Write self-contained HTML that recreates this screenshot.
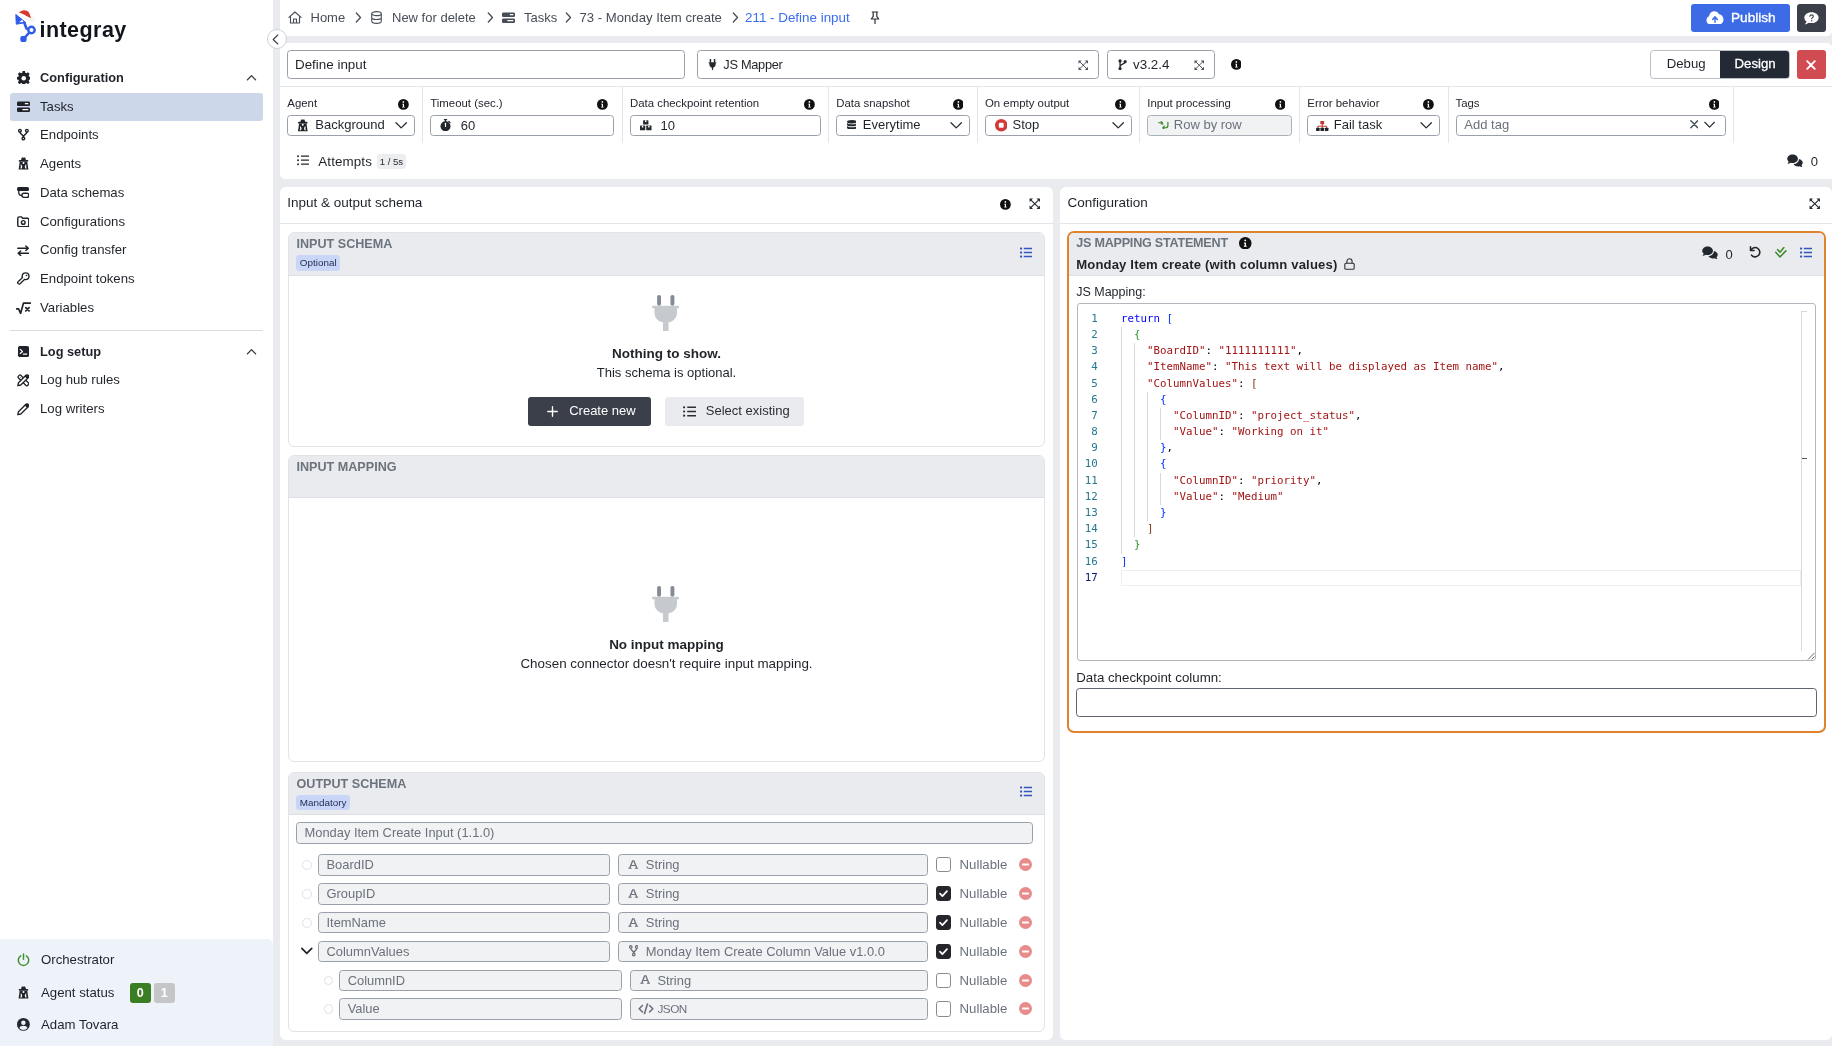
<!DOCTYPE html>
<html lang="en">
<head>
<meta charset="utf-8">
<title>211 - Define input</title>
<style>
*{box-sizing:border-box;margin:0;padding:0}
html,body{width:1832px;height:1046px;overflow:hidden}
body{font-family:"Liberation Sans",sans-serif;font-size:13px;color:#1f2329;background:#e9ebee;position:relative;line-height:1.2}
svg{display:block;flex:none}
.abs{position:absolute}
#app{position:absolute;left:0;top:0;width:1832px;height:1046px;background:#e9ebee;will-change:transform}
/* ---------- sidebar ---------- */
#sidebar{position:absolute;left:0;top:0;width:273px;height:1046px;background:#fff}
#logo{position:absolute;left:15px;top:8px;width:120px;height:36px}
#logo .word{position:absolute;left:24.5px;top:8.5px;font-weight:700;font-size:21.5px;letter-spacing:.45px;color:#12151c;line-height:26px}
.nav{position:absolute;left:10px;width:253px;height:28.8px;display:flex;align-items:center;border-radius:3px;font-size:13.2px;color:#1f2329}
.nav .ic{width:30px;padding-left:6.5px}
.nav.head{font-weight:700;font-size:12.8px;padding-top:1.5px}
.nav.sel{background:#cdd7ea;top:92.6px;height:28.2px}
.nav .chev{position:absolute;right:6.5px;top:10px}
#sidebar hr{position:absolute;left:10px;width:253px;top:330px;border:0;border-top:1px solid #d9dce0}
#sbottom{position:absolute;left:0;top:939px;width:273px;height:107px;background:#eef2f9;border-top-right-radius:6px}
#sbottom .row{position:absolute;left:17px;height:20px;display:flex;align-items:center;font-size:13.2px}
#sbottom .row .ic{width:24px}
.bdg{display:inline-block;width:21px;height:20.5px;line-height:20.5px;text-align:center;border-radius:3px;font-weight:700;font-size:12.6px;color:#fff}
/* ---------- top ---------- */
#crumbs{position:absolute;left:280px;top:0;width:1552px;height:36.2px;background:#fff;border-bottom-right-radius:5px}
#crumbs .c{position:absolute;top:0;height:35px;line-height:35px;font-size:13px;color:#474d57;white-space:nowrap}
#crumbs .c.cur{color:#3a6cf0}
#crumbs svg{position:absolute}
#toggle{position:absolute;left:266.5px;top:29.3px;width:20px;height:20px;border-radius:50%;background:#fff;border:1px solid #cdd1d7;z-index:5}
#publish{position:absolute;left:1691px;top:3.5px;width:98.5px;height:28.2px;background:#3d6be6;border-radius:3px;color:#fff;font-weight:400;font-size:13.6px;line-height:28px;padding-left:40px;-webkit-text-stroke:.35px #fff}
#chat{position:absolute;left:1797px;top:3.5px;width:28.6px;height:28.2px;background:#3a3f4a;border-radius:3px}
/* ---------- task card ---------- */
#task{position:absolute;left:280px;top:42.8px;width:1552px;height:136px;background:#fff;border-bottom-left-radius:5px;border-top-right-radius:5px}
.inp{position:absolute;border:1px solid #9aa0aa;border-radius:3.5px;background:#fff;white-space:nowrap}
.inp.dis{background:#f1f2f3;color:#6b717c}
#task .sep{position:absolute;top:43.5px;width:1px;height:57px;background:#e4e6e9}
#task .lbl{position:absolute;top:53.5px;font-size:11.4px;line-height:14px;color:#23272e;white-space:nowrap}
#task .info{position:absolute;top:56px}
#task .f{top:72.5px;height:20.5px;font-size:13px;line-height:18.5px}
#task .f svg{position:absolute}
#task .f span{position:absolute;top:0}
/* ---------- panels ---------- */
.panel{position:absolute;top:186.5px;height:853px;background:#fff;border-radius:6px}
.panel .ph{position:absolute;left:0;right:0;top:0;height:37px;border-bottom:1px solid #e4e6e9;font-size:13.5px;line-height:32.6px;padding-left:7.3px;color:#1f2329}
.card{position:absolute;border:1px solid #e1e3e7;border-radius:6px;background:#fff;overflow:hidden}
.card .ch{position:absolute;left:0;right:0;top:0;height:42.6px;background:#e9ebee;border-bottom:1px solid #dcdfe3}
.card .ct{position:absolute;left:7.5px;top:4px;font-weight:700;font-size:12.6px;line-height:15px;color:#6c737d;white-space:nowrap}
.tag{position:absolute;left:7px;top:22.3px;height:15.6px;line-height:16.6px;padding:0 3.8px;border-radius:3.5px;background:#c9d6f7;color:#1c2a52;font-size:9.9px}
.empty{position:absolute;left:0;right:0;text-align:center;white-space:nowrap}
.empty b{font-size:13.5px}
.btn{position:absolute;height:29px;border-radius:3px;font-size:13px;line-height:28px;white-space:nowrap}
.row{position:absolute;left:0;right:0;height:21.4px}
.row .inp{top:0;height:21.4px;font-size:12.9px;line-height:20.4px;padding-left:7.4px}
.row .radio{position:absolute;top:6px;width:9.5px;height:9.5px;border-radius:50%;border:1px solid #dfe1e5}
.row .cb{position:absolute;left:656px;top:3px;width:15.2px;height:15.2px;border:1.4px solid #868b94;border-radius:2.8px;background:#fff}
.row .cb.on{background:#24262b;border-color:#24262b}
.row .nl{position:absolute;left:679.6px;top:0;line-height:21.4px;font-size:13.2px;color:#6b717c}
.row .rm{position:absolute;left:739px;top:4px}
.row .ti{position:absolute;top:3.5px}
/* ---------- code ---------- */
#editor{position:absolute;left:8px;top:71px;width:739px;height:357px;border:1px solid #b3b7be;border-radius:3px;background:#fff;overflow:hidden}
#code{position:absolute;left:0;top:6.6px;font-family:"DejaVu Sans Mono","Liberation Mono",monospace;font-size:10.8px;line-height:16.2px;color:#000}
#code div{height:16.2px;position:relative;padding-left:43px;white-space:pre}
#code i{position:absolute;left:0;width:19.8px;text-align:right;font-style:normal;color:#237893}
.k{color:#0000ff}.s{color:#a31515}.b1{color:#0431fa}.b2{color:#319331}.b3{color:#7b3814}
.g{position:absolute;top:0;width:1px;height:16.2px;background:#d8d8d8}
</style>
</head>
<body>
<div id="app">
<!-- ================= SIDEBAR ================= -->
<aside id="sidebar">
  <div id="logo">
    <svg width="22" height="34" viewBox="0 0 22 34" style="position:absolute;left:0;top:1px">
      <path d="M.8 5.500 10.800 13.600 1.300 15.200z" fill="#2f5bea" stroke="#2f5bea" stroke-width="1" stroke-linejoin="round"/>
      <path d="M4 13.300 7.300 10.800 8.400 13z" fill="#fff"/>
      <path d="M9.300 13.800 11.500 19.500 16.500 21 9 29.500" fill="none" stroke="#2f5bea" stroke-width="2.600" stroke-linejoin="round"/>
      <circle cx="16.500" cy="21" r="4.400" fill="#2f5bea"/><circle cx="16.500" cy="21" r="2" fill="#fff"/>
      <rect x="5.300" y="27" width="6.300" height="6" rx="1.900" fill="#2f5bea"/>
      <path d="M3.500 3.800C6.500.600 11.500.200 14 3.600L16.300 9.200 6 5z" fill="#d8392f"/>
      <path d="M1.800 3.800C5 4.300 11.500 8 15 11.300" fill="none" stroke="#fff" stroke-width="2.300" stroke-linecap="round"/>
      <path d="M1.800 5C5 5.500 11.500 9.200 15 12.500" fill="none" stroke="#e3e3e8" stroke-width=".5" stroke-linecap="round"/>
      <circle cx="17.300" cy="10" r="1.900" fill="#fff" stroke="#d9d9de" stroke-width=".5"/>
    </svg>
    <span class="word">integray</span>
  </div>
  <div class="nav head" style="top:62.6px"><span class="ic"><svg width="13.5" height="13.5" viewBox="0 0 16 16"><path d="M6.600 0h2.800l.4 2.100 1.400.6 1.800-1.200 2 2-1.200 1.800.6 1.400 2.100.4v2.800l-2.100.4-.6 1.400 1.200 1.800-2 2-1.800-1.200-1.400.6-.4 2.100H6.600l-.4-2.100-1.400-.6L3 15.500l-2-2 1.200-1.800-.6-1.400L-.500 9.900V7.100l2.100-.4.6-1.400L1 3.500l2-2 1.800 1.200 1.400-.6z" fill="currentColor"/><circle cx="8" cy="8.500" r="2.700" fill="#fff"/></svg></span>Configuration<svg class="chev" width="11" height="9" viewBox="0 0 16 12"><path d="M2 9.500 8 3.200l6 6.300" fill="none" stroke="#2a2e36" stroke-width="1.800" stroke-linecap="round" stroke-linejoin="round"/></svg></div>
  <div class="nav sel"><span class="ic"><svg width="13" height="11.400" style="margin-left:.3px" viewBox="0 0 16 14"><rect x="0" y="0.500" width="16" height="5.600" rx="1.600" fill="currentColor"/><rect x="0" y="7.900" width="16" height="5.600" rx="1.600" fill="currentColor"/><rect x="9.500" y="2.500" width="4.600" height="1.600" rx=".8" fill="#fff"/><rect x="6.500" y="9.900" width="7.600" height="1.600" rx=".8" fill="#fff"/></svg></span>Tasks</div>
  <div class="nav" style="top:120.200px"><span class="ic"><svg width="10.800" height="13.300" viewBox="0 0 14 15" style="margin-left:1.500px"><circle cx="2.500" cy="2.400" r="1.700" fill="none" stroke="currentColor" stroke-width="1.800"/><circle cx="11.500" cy="2.400" r="1.700" fill="none" stroke="currentColor" stroke-width="1.800"/><circle cx="7" cy="12.500" r="1.700" fill="none" stroke="currentColor" stroke-width="1.800"/><path d="M2.500 4.100c0 3.400 4.500 2.600 4.500 6.700M11.500 4.100c0 3.400-4.500 2.600-4.500 6.700" fill="none" stroke="currentColor" stroke-width="1.800"/></svg></span>Endpoints</div>
  <div class="nav" style="top:149.600px"><span class="ic"><svg width="11" height="13" style="margin-left:1.400px" viewBox="0 0 11 13"><path d="M1.700 5 .600 12.500h9.800L9.300 5z" fill="currentColor"/><path d="M3 3.300 3.700.700C4.300.200 5 .500 5.500.700 6 .500 6.700.200 7.300.700L8 3.300z" fill="currentColor"/><rect x=".7" y="2.900" width="9.600" height="1.800" rx=".9" fill="currentColor"/><circle cx="5.500" cy="5.900" r="1" fill="#fff"/><path d="M3.300 7.400 4.300 9.400 3.700 11.500H2.300L2.900 9.600 2.500 7.800zM7.700 7.400 6.700 9.400 7.300 11.500H8.700L8.100 9.600 8.500 7.800z" fill="#fff"/></svg></span>Agents</div>
  <div class="nav" style="top:178.500px"><span class="ic"><svg width="12.500" height="11.500" viewBox="0 0 13 12" style="margin-left:.3px"><rect x="0" y="0" width="12.500" height="4.300" rx="1.600" fill="currentColor"/><path d="M1.800 4v1.600c0 2 1.500 3.400 3.500 3.400" fill="none" stroke="currentColor" stroke-width="1.400"/><rect x="5.100" y="6.500" width="7.200" height="4.300" rx="2.100" fill="none" stroke="currentColor" stroke-width="1.400"/></svg></span>Data schemas</div>
  <div class="nav" style="top:207.200px"><span class="ic"><svg width="12.500" height="11.500" viewBox="0 0 13 12" style="margin-left:.3px"><path d="M.8 2.300c0-.8.600-1.400 1.400-1.400h2.300l1.400 1.500h5c.8 0 1.400.6 1.400 1.400v5.900c0 .8-.6 1.400-1.400 1.400H2.200c-.8 0-1.400-.6-1.400-1.400z" fill="none" stroke="currentColor" stroke-width="1.500" stroke-linejoin="round"/><circle cx="6.500" cy="6.700" r="1.900" fill="none" stroke="currentColor" stroke-width="1.500"/></svg></span>Configurations</div>
  <div class="nav" style="top:236px"><span class="ic"><svg width="12.500" height="11.500" viewBox="0 0 16 14" style="margin-left:.3px"><path d="M1 3.800h13.400M11.300.9l3.200 2.900-3.200 2.900M15 10.200H1.600M4.700 7.300l-3.200 2.900 3.200 2.900" fill="none" stroke="currentColor" stroke-width="1.900" stroke-linecap="round" stroke-linejoin="round"/></svg></span>Config transfer</div>
  <div class="nav" style="top:264.200px"><span class="ic"><svg width="13" height="12.500" viewBox="0 0 16 15.400" style="margin-left:.2px"><circle cx="10.600" cy="5.300" r="5" fill="currentColor"/><path d="M8 8 2.600 13.200" stroke="currentColor" stroke-width="5" stroke-linecap="round"/><circle cx="10.600" cy="5.300" r="3.300" fill="#fff"/><path d="M8.300 7.700 2.600 13.200" stroke="#fff" stroke-width="1.900" stroke-linecap="round"/><circle cx="11.700" cy="4.300" r="1" fill="currentColor"/></svg></span>Endpoint tokens</div>
  <div class="nav" style="top:293.600px"><span class="ic"><svg width="15" height="12.500" viewBox="0 0 18 15" style="margin-left:-.5px"><path d="M.8 8.300h2.300l2.400 5.400L9 1.300h8.300" fill="none" stroke="currentColor" stroke-width="2" stroke-linejoin="round" stroke-linecap="round"/><path d="M11.700 6.700l4 4M15.700 6.700l-4 4" stroke="currentColor" stroke-width="2.100" stroke-linecap="round"/></svg></span>Variables</div>
  <hr>
  <div class="nav head" style="top:336.600px"><span class="ic"><svg width="11" height="11.200" viewBox="0 0 14 14" style="margin-left:1.300px"><rect width="14" height="14" rx="2.200" fill="currentColor"/><path d="M2.800 4.200l3 2.600-3 2.600M6.800 10.200h4.400" fill="none" stroke="#fff" stroke-width="1.500" stroke-linecap="round" stroke-linejoin="round"/></svg></span>Log setup<svg class="chev" width="11" height="9" viewBox="0 0 16 12"><path d="M2 9.500 8 3.200l6 6.300" fill="none" stroke="#2a2e36" stroke-width="1.800" stroke-linecap="round" stroke-linejoin="round"/></svg></div>
  <div class="nav" style="top:366px"><span class="ic"><svg width="12.500" height="12.500" viewBox="0 0 16 16" style="margin-left:.2px"><rect x="-2.300" y="-8.300" width="4.600" height="16.600" rx="1.300" transform="translate(8.200 8.200) rotate(-45)" fill="none" stroke="currentColor" stroke-width="1.600"/><path d="M3.300 5.600 4.500 4.400M5.300 7.600 6.500 6.400" stroke="currentColor" stroke-width="1.200"/><path d="M1 15l.9-3.800L11.400 1.700c.9-.9 2.200-.9 3 0 .8.800.8 2.100 0 3L4.800 14.100z" fill="#fff" stroke="currentColor" stroke-width="1.700" stroke-linejoin="round"/><path d="M9.800 3.300 12.700 6.200 14.600 4.300c.7-.9.400-1.900-.3-2.600-.7-.7-1.800-.9-2.600-.2z" fill="currentColor"/></svg></span>Log hub rules</div>
  <div class="nav" style="top:395px"><span class="ic"><svg width="12.500" height="12.500" viewBox="0 0 16 16" style="margin-left:.2px"><path d="M1 15l.9-3.800L11.400 1.700c.9-.9 2.200-.9 3 0 .8.800.8 2.100 0 3L4.800 14.100z" fill="#fff" stroke="currentColor" stroke-width="1.700" stroke-linejoin="round"/><path d="M9.800 3.300 12.700 6.200 14.600 4.300c.7-.9.400-1.900-.3-2.600-.7-.7-1.800-.9-2.600-.2z" fill="currentColor"/></svg></span>Log writers</div>

  <div id="sbottom">
    <div class="row" style="top:10.800px"><span class="ic"><svg width="13" height="13.500" viewBox="0 0 16 16"><path d="M4.600 3.200A6.400 6.400 0 1 0 11.400 3.200" fill="none" stroke="#3f8f2e" stroke-width="1.800" stroke-linecap="round"/><path d="M8 .9v6.600" stroke="#3f8f2e" stroke-width="1.800" stroke-linecap="round"/></svg></span>Orchestrator</div>
    <div class="row" style="top:43.900px"><span class="ic"><svg width="11" height="13" style="margin-left:1.200px" viewBox="0 0 11 13"><path d="M1.700 5 .600 12.500h9.800L9.300 5z" fill="currentColor"/><path d="M3 3.300 3.700.700C4.300.200 5 .500 5.500.700 6 .500 6.700.200 7.300.700L8 3.300z" fill="currentColor"/><rect x=".7" y="2.900" width="9.600" height="1.800" rx=".9" fill="currentColor"/><circle cx="5.500" cy="5.900" r="1" fill="#fff"/><path d="M3.300 7.400 4.300 9.400 3.700 11.500H2.300L2.900 9.600 2.500 7.800zM7.700 7.400 6.700 9.400 7.300 11.500H8.700L8.100 9.600 8.500 7.800z" fill="#fff"/></svg></span>Agent status<span class="bdg" style="background:#3a7d22;margin-left:15.500px">0</span><span class="bdg" style="background:#c5c6c8;margin-left:3px">1</span></div>
    <div class="row" style="top:75.800px"><span class="ic"><svg width="12.800" height="12.800" viewBox="0 0 16 16" style="margin-left:.3px"><circle cx="8" cy="8" r="8" fill="#23272e"/><circle cx="8" cy="6" r="2.800" fill="#eef2f9"/><path d="M2.900 12.600c.8-1.800 2.500-2.900 5.100-2.900s4.300 1.100 5.100 2.900A6.600 6.600 0 0 1 2.900 12.600z" fill="#eef2f9"/></svg></span>Adam Tovara</div>
  </div>
</aside>

<!-- ================= TOP BAR ================= -->
<header id="crumbs">
  <svg width="14" height="13" viewBox="0 0 16 15" style="left:8px;top:11px"><path d="M1 7.300 8 1.100l7 6.200M2.800 6.300v7.600h10.400V6.300M6.300 13.900V9.300h3.400v4.600" fill="none" stroke="#474d57" stroke-width="1.300" stroke-linejoin="round" stroke-linecap="round"/></svg>
  <span class="c" style="left:30.500px">Home</span>
  <svg width="7" height="11" viewBox="0 0 7 11" style="left:74.500px;top:12px"><path d="M1.300 1l4.200 4.500L1.300 10" fill="none" stroke="#474d57" stroke-width="1.300" stroke-linecap="round" stroke-linejoin="round"/></svg>
  <svg width="11" height="13" viewBox="0 0 12 14" style="left:91px;top:11px"><ellipse cx="6" cy="2.800" rx="5.200" ry="2.200" fill="none" stroke="#474d57" stroke-width="1.200"/><path d="M.8 2.800v8.400c0 1.200 2.300 2.200 5.200 2.200s5.200-1 5.200-2.200V2.800M.8 7c0 1.200 2.300 2.200 5.200 2.200s5.200-1 5.200-2.200" fill="none" stroke="#474d57" stroke-width="1.200"/></svg>
  <span class="c" style="left:112px">New for delete</span>
  <svg width="7" height="11" viewBox="0 0 7 11" style="left:206.500px;top:12px"><path d="M1.300 1l4.200 4.500L1.300 10" fill="none" stroke="#474d57" stroke-width="1.300" stroke-linecap="round" stroke-linejoin="round"/></svg>
  <svg width="13" height="11.400" style="left:222.300px;top:12px;color:#474d57" viewBox="0 0 16 14"><rect x="0" y="0.500" width="16" height="5.600" rx="1.600" fill="currentColor"/><rect x="0" y="7.900" width="16" height="5.600" rx="1.600" fill="currentColor"/><rect x="9.500" y="2.500" width="4.600" height="1.600" rx=".8" fill="#fff"/><rect x="6.500" y="9.900" width="7.600" height="1.600" rx=".8" fill="#fff"/></svg>
  <span class="c" style="left:244px">Tasks</span>
  <svg width="7" height="11" viewBox="0 0 7 11" style="left:285px;top:12px"><path d="M1.300 1l4.200 4.500L1.300 10" fill="none" stroke="#474d57" stroke-width="1.300" stroke-linecap="round" stroke-linejoin="round"/></svg>
  <span class="c" style="left:299.500px;font-size:13.150px">73 - Monday Item create</span>
  <svg width="7" height="11" viewBox="0 0 7 11" style="left:451.500px;top:12px"><path d="M1.300 1l4.200 4.500L1.300 10" fill="none" stroke="#474d57" stroke-width="1.300" stroke-linecap="round" stroke-linejoin="round"/></svg>
  <span class="c cur" style="left:465px;font-size:13.400px">211 - Define input</span>
  <svg width="10" height="13" viewBox="0 0 10 13" style="left:590px;top:10.500px"><path d="M2.300 1h5.400M3.200 1v4.300L1.300 8h7.400L6.800 5.300V1M5 8v4.500" fill="none" stroke="#2a2e36" stroke-width="1.200" stroke-linejoin="round" stroke-linecap="round"/></svg>
</header>
<div id="toggle"><svg width="7" height="11" viewBox="0 0 7 11" style="position:absolute;left:4.500px;top:3.500px"><path d="M5.800 1 1.200 5.500 5.800 10" fill="none" stroke="#3a3f4a" stroke-width="1.100" stroke-linecap="round" stroke-linejoin="round"/></svg></div>
<div id="publish"><svg width="18" height="13.800" viewBox="0 0 20 14" preserveAspectRatio="none" style="position:absolute;left:15px;top:7.200px"><path d="M5 13.800c-2.500 0-4.500-1.900-4.500-4.300 0-1.900 1.200-3.500 3-4.100C3.700 2.400 6.200.200 9.200.200c2.300 0 4.300 1.300 5.300 3.200 2.700.2 4.900 2.400 4.900 5.100 0 2.900-2.300 5.300-5.300 5.300z" fill="#fff"/><path d="M10 11.500V6.500M7.500 8.500 10 6l2.500 2.500" fill="none" stroke="#3d6be6" stroke-width="1.600" stroke-linecap="round" stroke-linejoin="round"/></svg>Publish</div>
<div id="chat"><svg width="15" height="13" viewBox="0 0 16 14" style="position:absolute;left:7px;top:8px"><path d="M8 .300c4.300 0 7.700 2.600 7.700 5.800S12.300 11.900 8 11.900c-1 0-2-.1-2.900-.4-1.100.9-2.600 1.600-4.300 1.700.9-.9 1.500-2 1.800-3.100C1.100 9.100.300 7.700.300 6.100.300 2.900 3.700.300 8 .300z" fill="#fff"/><path d="M6.200 4.600c.2-1 1-1.500 1.900-1.500 1.100 0 1.900.7 1.900 1.600 0 1.400-1.800 1.300-1.800 2.600" fill="none" stroke="#3a3f4a" stroke-width="1.200" stroke-linecap="round"/><circle cx="8.200" cy="9.300" r=".8" fill="#3a3f4a"/></svg></div>

<!-- ================= TASK CARD ================= -->
<section id="task">
  <div class="inp" style="left:7.400px;top:7.500px;width:398px;height:28.300px;font-size:13.400px;line-height:27.800px;padding-left:6.600px">Define input</div>
  <div class="inp" style="left:417px;top:7.500px;width:401.500px;height:28.300px;font-size:12.800px;letter-spacing:-.3px;line-height:27.800px;padding-left:25.300px">
    <svg width="9" height="11" viewBox="0 0 12 15" style="position:absolute;left:10px;top:7.500px"><path d="M3.200 0v4M8.800 0v4" stroke="#23272e" stroke-width="2" stroke-linecap="round"/><path d="M.8 4.500h10.400v1.300h-.9v1.400c0 2.300-1.500 4.100-3.500 4.600V15H5.200v-3.200C3.200 11.300 1.700 9.500 1.700 7.200V5.800H.8z" fill="#23272e"/></svg>JS Mapper
    <svg width="10.500" height="10.500" style="position:absolute;right:9px;top:8.500px;color:#4a505a" viewBox="0 0 16 16"><path d="M2.800 2.800 13.200 13.200M13.200 2.800 2.800 13.200" stroke="currentColor" stroke-width="1.500" fill="none"/><path d="M.8 5.600V.8h4.800zM10.400.8h4.800v4.800zM15.200 10.400v4.800h-4.800zM5.600 15.200H.8v-4.800z" fill="currentColor"/></svg>
  </div>
  <div class="inp" style="left:827px;top:7.500px;width:107.500px;height:28.300px;font-size:13.400px;line-height:27.800px;padding-left:25px">
    <svg width="9" height="11.500" viewBox="0 0 11 14" style="position:absolute;left:9.500px;top:7.500px"><circle cx="2.500" cy="2.300" r="2" fill="#23272e"/><circle cx="2.500" cy="11.700" r="2" fill="#23272e"/><circle cx="8.700" cy="3.300" r="2" fill="#23272e"/><path d="M2.500 2.300v9.400M8.700 3.300c0 3.500-6.200 2.500-6.200 6" fill="none" stroke="#23272e" stroke-width="1.600"/></svg>v3.2.4
    <svg width="10.500" height="10.500" style="position:absolute;right:9px;top:8.500px;color:#4a505a" viewBox="0 0 16 16"><path d="M2.800 2.800 13.200 13.200M13.200 2.800 2.800 13.200" stroke="currentColor" stroke-width="1.500" fill="none"/><path d="M.8 5.600V.8h4.800zM10.400.8h4.800v4.800zM15.200 10.400v4.800h-4.800zM5.600 15.200H.8v-4.800z" fill="currentColor"/></svg>
  </div>
  <svg width="10.800" height="10.800" style="position:absolute;left:950.700px;top:16px;color:#111" viewBox="0 0 16 16"><circle cx="8" cy="8" r="8" fill="currentColor"/><circle cx="8" cy="4.3" r="1.25" fill="#fff"/><path d="M6.3 7h2.6v4.3h1v1.3H6.2v-1.3h1V8.3h-.9z" fill="#fff"/></svg>
  <div class="abs" style="left:1370.400px;top:7.500px;width:139.400px;height:28.300px;border:1px solid #b9bdc4;border-radius:3.500px;overflow:hidden;font-size:13.200px;line-height:25.500px">
    <span class="abs" style="left:0;top:0;width:69.500px;height:100%;text-align:center;color:#1f2329">Debug</span>
    <span class="abs" style="left:69px;top:-1px;right:-1px;bottom:-1px;background:#232a36;color:#fff;text-align:center;line-height:27.500px;-webkit-text-stroke:.3px #fff">Design</span>
  </div>
  <div class="abs" style="left:1517px;top:7.500px;width:28.600px;height:28.300px;background:#d14b52;border-radius:3px"><svg width="10" height="10" viewBox="0 0 10 10" style="position:absolute;left:9.300px;top:9.300px"><path d="M1.200 1.200l7.600 7.600M8.800 1.200 1.200 8.800" stroke="#fff" stroke-width="1.900" stroke-linecap="round"/></svg></div>
  <div class="abs" style="left:0;right:0;top:43.500px;height:1px;background:#e4e6e9"></div>
  <!-- Agent -->
  <span class="lbl" style="left:7.300px">Agent</span><svg class="info" width="10.800" height="10.800" style="left:118.3px;color:#111" viewBox="0 0 16 16"><circle cx="8" cy="8" r="8" fill="currentColor"/><circle cx="8" cy="4.3" r="1.25" fill="#fff"/><path d="M6.3 7h2.6v4.3h1v1.3H6.2v-1.3h1V8.3h-.9z" fill="#fff"/></svg>
  <div class="inp f" style="left:7.300px;width:127.500px"><svg width="11.600" height="12.800" style="left:8.700px;top:2.600px" viewBox="0 0 11 13"><path d="M1.700 5 .600 12.500h9.800L9.300 5z" fill="currentColor"/><path d="M3 3.300 3.700.700C4.300.200 5 .500 5.500.700 6 .500 6.700.200 7.300.700L8 3.300z" fill="currentColor"/><rect x=".7" y="2.900" width="9.600" height="1.800" rx=".9" fill="currentColor"/><circle cx="5.500" cy="5.900" r="1" fill="#fff"/><path d="M3.300 7.400 4.300 9.400 3.700 11.500H2.300L2.900 9.600 2.500 7.800zM7.700 7.400 6.700 9.400 7.300 11.500H8.700L8.100 9.600 8.500 7.800z" fill="#fff"/></svg><span style="left:27px">Background</span><svg width="14.400" height="14.400" style="right:5.800px;top:1.500px;color:#2a2e36" viewBox="0 0 16 16"><path d="M2.2 5.2 8 11l5.8-5.8" fill="none" stroke="currentColor" stroke-width="1.45" stroke-linecap="round" stroke-linejoin="round"/></svg></div>
  <i class="sep" style="left:142.200px"></i>
  <!-- Timeout -->
  <span class="lbl" style="left:150.300px">Timeout (sec.)</span><svg class="info" width="10.800" height="10.800" style="left:317.2px;color:#111" viewBox="0 0 16 16"><circle cx="8" cy="8" r="8" fill="currentColor"/><circle cx="8" cy="4.3" r="1.25" fill="#fff"/><path d="M6.3 7h2.6v4.3h1v1.3H6.2v-1.3h1V8.3h-.9z" fill="#fff"/></svg>
  <div class="inp f" style="left:150.300px;width:183.500px"><svg width="11" height="12.500" viewBox="0 0 14 16" style="left:8.500px;top:2.500px"><circle cx="7" cy="9.300" r="6.400" fill="#23272e"/><rect x="4.800" y="0" width="4.400" height="1.700" rx=".6" fill="#23272e"/><rect x="6.200" y="1" width="1.600" height="3" fill="#23272e"/><path d="M11.300 3.200l1.300 1.300" stroke="#23272e" stroke-width="1.600" stroke-linecap="round"/><path d="M7 5.500v4" stroke="#fff" stroke-width="1.500" stroke-linecap="round"/></svg><span style="left:29.500px;top:.6px">60</span></div>
  <i class="sep" style="left:341.500px"></i>
  <!-- Data checkpoint retention -->
  <span class="lbl" style="left:350px">Data checkpoint retention</span><svg class="info" width="10.800" height="10.800" style="left:524.2px;color:#111" viewBox="0 0 16 16"><circle cx="8" cy="8" r="8" fill="currentColor"/><circle cx="8" cy="4.3" r="1.25" fill="#fff"/><path d="M6.3 7h2.6v4.3h1v1.3H6.2v-1.3h1V8.3h-.9z" fill="#fff"/></svg>
  <div class="inp f" style="left:350px;width:191px"><svg width="11.500" height="10.500" viewBox="0 0 16 14" style="left:9px;top:4px"><rect x="4.300" y="0" width="7.400" height="6" rx=".9" fill="#23272e"/><rect x="0" y="7.500" width="7.300" height="6.500" rx=".9" fill="#23272e"/><rect x="8.700" y="7.500" width="7.300" height="6.500" rx=".9" fill="#23272e"/><rect x="7" y="0" width="2" height="2.600" fill="#fff"/><rect x="2.600" y="7.500" width="2" height="2.600" fill="#fff"/><rect x="11.400" y="7.500" width="2" height="2.600" fill="#fff"/></svg><span style="left:29.500px;top:.6px">10</span></div>
  <i class="sep" style="left:548px"></i>
  <!-- Data snapshot -->
  <span class="lbl" style="left:556.300px">Data snapshot</span><svg class="info" width="10.800" height="10.800" style="left:672.7px;color:#111" viewBox="0 0 16 16"><circle cx="8" cy="8" r="8" fill="currentColor"/><circle cx="8" cy="4.3" r="1.25" fill="#fff"/><path d="M6.3 7h2.6v4.3h1v1.3H6.2v-1.3h1V8.3h-.9z" fill="#fff"/></svg>
  <div class="inp f" style="left:556.300px;width:133.500px"><svg width="9.500" height="9.800" viewBox="0 0 12 14" preserveAspectRatio="none" style="left:9.500px;top:3.400px"><ellipse cx="6" cy="2.500" rx="6" ry="2.500" fill="#23272e"/><path d="M0 4.300c1 1.300 3.300 1.900 6 1.900s5-.6 6-1.900v2.400c0 1.300-2.700 2.300-6 2.300S0 8 0 6.700zM0 8.600c1 1.300 3.300 1.900 6 1.900s5-.6 6-1.900v2.600c0 1.400-2.700 2.500-6 2.500s-6-1.100-6-2.500z" fill="#23272e"/></svg><span style="left:25.500px">Everytime</span><svg width="14.400" height="14.400" style="right:5.800px;top:1.500px;color:#2a2e36" viewBox="0 0 16 16"><path d="M2.2 5.2 8 11l5.8-5.8" fill="none" stroke="currentColor" stroke-width="1.45" stroke-linecap="round" stroke-linejoin="round"/></svg></div>
  <i class="sep" style="left:697px"></i>
  <!-- On empty output -->
  <span class="lbl" style="left:705px">On empty output</span><svg class="info" width="10.800" height="10.800" style="left:835.2px;color:#111" viewBox="0 0 16 16"><circle cx="8" cy="8" r="8" fill="currentColor"/><circle cx="8" cy="4.3" r="1.25" fill="#fff"/><path d="M6.3 7h2.6v4.3h1v1.3H6.2v-1.3h1V8.3h-.9z" fill="#fff"/></svg>
  <div class="inp f" style="left:705px;width:147px"><svg width="12.500" height="12.500" viewBox="0 0 16 16" style="left:8.500px;top:3px"><circle cx="8" cy="8" r="8" fill="#d23a3a"/><rect x="4.900" y="4.900" width="6.200" height="6.200" rx="1.300" fill="#fff"/></svg><span style="left:26.500px">Stop</span><svg width="14.400" height="14.400" style="right:5.800px;top:1.500px;color:#2a2e36" viewBox="0 0 16 16"><path d="M2.2 5.2 8 11l5.8-5.8" fill="none" stroke="currentColor" stroke-width="1.45" stroke-linecap="round" stroke-linejoin="round"/></svg></div>
  <i class="sep" style="left:859px"></i>
  <!-- Input processing -->
  <span class="lbl" style="left:867.300px">Input processing</span><svg class="info" width="10.800" height="10.800" style="left:994.7px;color:#111" viewBox="0 0 16 16"><circle cx="8" cy="8" r="8" fill="currentColor"/><circle cx="8" cy="4.3" r="1.25" fill="#fff"/><path d="M6.3 7h2.6v4.3h1v1.3H6.2v-1.3h1V8.3h-.9z" fill="#fff"/></svg>
  <div class="inp dis f" style="left:867.300px;width:144.500px;border-color:#adb2ba"><svg width="10.500" height="8.500" viewBox="0 0 14 11" style="left:10px;top:4.500px"><path d="M.8 2.200h3.800l2 2M4.200.600l1.700 1.600-1.700 1.600" fill="none" stroke="#3a8a2a" stroke-width="1.500" stroke-linecap="round" stroke-linejoin="round"/><path d="M13.200 1.500v4.300c0 1.700-1.300 3-3 3H6.500M8.500 6.600l-2.100 2.200 2.100 2.100" fill="none" stroke="#3a8a2a" stroke-width="1.600" stroke-linecap="round" stroke-linejoin="round"/></svg><span style="left:25.500px">Row by row</span></div>
  <i class="sep" style="left:1019px"></i>
  <!-- Error behavior -->
  <span class="lbl" style="left:1027.300px">Error behavior</span><svg class="info" width="10.800" height="10.800" style="left:1143.2px;color:#111" viewBox="0 0 16 16"><circle cx="8" cy="8" r="8" fill="currentColor"/><circle cx="8" cy="4.3" r="1.25" fill="#fff"/><path d="M6.3 7h2.6v4.3h1v1.3H6.2v-1.3h1V8.3h-.9z" fill="#fff"/></svg>
  <div class="inp f" style="left:1027.300px;width:132.500px"><svg width="12.500" height="10" viewBox="0 0 16 13" style="left:8px;top:4.500px"><rect x="5.500" y="0" width="5" height="4.300" rx=".8" fill="#c0392b"/><path d="M8 4v3M2.300 9V6.800h11.400V9M8 6.800V9" fill="none" stroke="#c0392b" stroke-width="1.300"/><rect x="0" y="8.700" width="4.600" height="4.300" rx=".8" fill="#1f2329"/><rect x="5.700" y="8.700" width="4.600" height="4.300" rx=".8" fill="#1f2329"/><rect x="11.400" y="8.700" width="4.600" height="4.300" rx=".8" fill="#1f2329"/></svg><span style="left:25.500px">Fail task</span><svg width="14.400" height="14.400" style="right:5.800px;top:1.500px;color:#2a2e36" viewBox="0 0 16 16"><path d="M2.2 5.2 8 11l5.8-5.8" fill="none" stroke="currentColor" stroke-width="1.45" stroke-linecap="round" stroke-linejoin="round"/></svg></div>
  <i class="sep" style="left:1167.500px"></i>
  <!-- Tags -->
  <span class="lbl" style="left:1175.500px">Tags</span><svg class="info" width="10.800" height="10.800" style="left:1428.7px;color:#111" viewBox="0 0 16 16"><circle cx="8" cy="8" r="8" fill="currentColor"/><circle cx="8" cy="4.3" r="1.25" fill="#fff"/><path d="M6.3 7h2.6v4.3h1v1.3H6.2v-1.3h1V8.3h-.9z" fill="#fff"/></svg>
  <div class="inp f" style="left:1175.800px;width:270px"><span style="left:7.500px;color:#6b717c">Add tag</span><svg width="8.500" height="8.500" viewBox="0 0 10 10" style="right:26.600px;top:4px"><path d="M1 1l8 8M9 1 1 9" stroke="#4a505a" stroke-width="1.700" stroke-linecap="round"/></svg><svg width="13.200" height="13.200" style="right:8.600px;top:1.800px;color:#2a2e36" viewBox="0 0 16 16"><path d="M2.2 5.2 8 11l5.8-5.8" fill="none" stroke="currentColor" stroke-width="1.45" stroke-linecap="round" stroke-linejoin="round"/></svg></div>
  <i class="sep" style="left:1453px"></i>
  <!-- attempts -->
  <svg width="12.800" height="10.400" viewBox="0 0 16 13" style="position:absolute;left:16.700px;top:112.400px;color:#23272e"><path d="M5 1.500h11M5 6.500h11M5 11.500h11" stroke="currentColor" stroke-width="1.600" fill="none"/><circle cx="1.300" cy="1.500" r="1.200" fill="currentColor"/><circle cx="1.300" cy="6.500" r="1.200" fill="currentColor"/><circle cx="1.300" cy="11.500" r="1.200" fill="currentColor"/></svg>
  <span class="abs" style="left:38.300px;top:110px;font-size:13.400px;line-height:17px;letter-spacing:.1px">Attempts</span>
  <span class="abs" style="left:96.700px;top:111px;width:29.500px;height:15.300px;border-radius:3px;background:#eceef0;font-size:9.600px;line-height:16px;text-align:center;color:#2a2e36">1 / 5s</span>
  <svg width="16" height="12.800" style="position:absolute;left:1506.700px;top:111px;color:#23272e" viewBox="0 0 20 16"><path d="M7 0.500c3.700 0 6.700 2.400 6.700 5.400S10.700 11.300 7 11.300c-.9 0-1.800-.1-2.600-.4C3.400 11.700 2 12.300.500 12.300c.8-.8 1.400-1.800 1.600-2.800C.9 8.500.300 7.300.300 5.900.300 2.900 3.300.500 7 .500z" fill="currentColor"/><path d="M15 6.200c2.600.6 4.700 2.500 4.700 4.800 0 1.200-.6 2.300-1.500 3.200.2.900.7 1.700 1.400 2.300-1.400 0-2.600-.5-3.500-1.200-.7.200-1.500.3-2.300.3-2.600 0-4.800-1.200-5.800-3 4-.2 7-2.900 7-6.400z" fill="currentColor"/></svg>
  <span class="abs" style="left:1530.800px;top:110.500px;font-size:13px;line-height:17px">0</span>
</section>

<!-- ================= LEFT PANEL ================= -->
<section class="panel" style="left:280px;width:773px">
  <div class="ph">Input &amp; output schema
    <svg width="10.800" height="10.800" style="position:absolute;left:720.300px;top:12.500px;color:#111" viewBox="0 0 16 16"><circle cx="8" cy="8" r="8" fill="currentColor"/><circle cx="8" cy="4.3" r="1.25" fill="#fff"/><path d="M6.3 7h2.6v4.3h1v1.3H6.2v-1.3h1V8.3h-.9z" fill="#fff"/></svg>
    <svg width="11.500" height="11.500" style="position:absolute;left:749px;top:11.400px;color:#23272e" viewBox="0 0 16 16"><path d="M2.800 2.800 13.200 13.200M13.200 2.800 2.800 13.200" stroke="currentColor" stroke-width="1.500" fill="none"/><path d="M.8 5.600V.8h4.800zM10.400.8h4.800v4.800zM15.200 10.400v4.800h-4.800zM5.600 15.200H.8v-4.800z" fill="currentColor"/></svg>
  </div>
  <!-- input schema -->
  <div class="card" style="left:8px;top:45.700px;width:757px;height:214.400px">
    <div class="ch"><span class="ct">INPUT SCHEMA</span><span class="tag">Optional</span><svg width="12" height="11" style="position:absolute;left:731px;top:13.800px;color:#3357bd" viewBox="0 0 12 11"><path d="M3.800 1.500H12M3.800 5.500H12M3.800 9.500H12" stroke="currentColor" stroke-width="1.400" fill="none"/><rect x="0" y=".4" width="2.100" height="2.200" rx=".5" fill="currentColor"/><rect x="0" y="4.400" width="2.100" height="2.200" rx=".5" fill="currentColor"/><rect x="0" y="8.400" width="2.100" height="2.200" rx=".5" fill="currentColor"/></svg></div>
    <svg width="27.500" height="36.300" style="position:absolute;left:362.800px;top:61.500px" viewBox="0 0 28 37"><rect x="5.200" y="0" width="4" height="11" rx="1.800" fill="#858b95"/><rect x="18.800" y="0" width="4" height="11" rx="1.800" fill="#858b95"/><path d="M1.200 11h25.600a1.200 1.200 0 0 1 0 2.600H25.500v4.400c0 5-3.500 9-8.700 9.900V37h-5.600V27.900C6 27 2.500 23 2.500 18V13.600H1.200a1.200 1.200 0 0 1 0-2.600z" fill="#c6c9ce"/></svg>
    <div class="empty" style="top:112.500px"><b>Nothing to show.</b></div>
    <div class="empty" style="top:131.500px">This schema is optional.</div>
    <div class="btn" style="left:239.200px;top:163.700px;width:123px;background:#3a3f4a;color:#fff;padding-left:41px"><svg width="11" height="11" viewBox="0 0 12 12" style="position:absolute;left:18.500px;top:9px"><path d="M6 .8v10.400M.8 6h10.400" stroke="#fff" stroke-width="1.500" stroke-linecap="round"/></svg>Create new</div>
    <div class="btn" style="left:376.300px;top:163.700px;width:139px;background:#e9ebee;color:#2a2e36;padding-left:40.500px"><svg width="13.500" height="11" viewBox="0 0 16 13" style="position:absolute;left:17.500px;top:9px;color:#2a2e36"><path d="M5 1.500h11M5 6.500h11M5 11.500h11" stroke="currentColor" stroke-width="1.700" fill="none"/><circle cx="1.300" cy="1.500" r="1.300" fill="currentColor"/><circle cx="1.300" cy="6.500" r="1.300" fill="currentColor"/><circle cx="1.300" cy="11.500" r="1.300" fill="currentColor"/></svg>Select existing</div>
  </div>
  <!-- input mapping -->
  <div class="card" style="left:8px;top:268.400px;width:757px;height:307.200px">
    <div class="ch"><span class="ct">INPUT MAPPING</span></div>
    <svg width="27.500" height="36.300" style="position:absolute;left:362.800px;top:130px" viewBox="0 0 28 37"><rect x="5.200" y="0" width="4" height="11" rx="1.800" fill="#858b95"/><rect x="18.800" y="0" width="4" height="11" rx="1.800" fill="#858b95"/><path d="M1.200 11h25.600a1.200 1.200 0 0 1 0 2.600H25.500v4.400c0 5-3.500 9-8.700 9.900V37h-5.600V27.900C6 27 2.500 23 2.500 18V13.600H1.200a1.200 1.200 0 0 1 0-2.600z" fill="#c6c9ce"/></svg>
    <div class="empty" style="top:181.300px"><b>No input mapping</b></div>
    <div class="empty" style="top:200.300px;font-size:13.400px">Chosen connector doesn't require input mapping.</div>
  </div>
  <!-- output schema -->
  <div class="card" style="left:8px;top:585.100px;width:757px;height:260.100px">
    <div class="ch"><span class="ct">OUTPUT SCHEMA</span><span class="tag">Mandatory</span><svg width="12" height="11" style="position:absolute;left:731px;top:13.800px;color:#3357bd" viewBox="0 0 12 11"><path d="M3.800 1.500H12M3.800 5.500H12M3.800 9.500H12" stroke="currentColor" stroke-width="1.400" fill="none"/><rect x="0" y=".4" width="2.100" height="2.200" rx=".5" fill="currentColor"/><rect x="0" y="4.400" width="2.100" height="2.200" rx=".5" fill="currentColor"/><rect x="0" y="8.400" width="2.100" height="2.200" rx=".5" fill="currentColor"/></svg></div>
    <div class="inp dis" style="left:7px;top:49.800px;width:737px;height:21.400px;font-size:12.900px;line-height:20.400px;padding-left:7.500px">Monday Item Create Input (1.1.0)</div>
  </div>
  <div class="abs" style="left:0;top:0;width:773px;height:0">
    <div class="row" style="top:667.8px"><span class="radio" style="left:22.2px"></span><div class="inp dis" style="left:38.1px;width:291.5px">BoardID</div><div class="inp dis" style="left:338.3px;width:309.600px;padding-left:26.5px"><svg class="ti" width="10.500" height="11" style="left:9px;color:#6b717c" viewBox="0 0 16 16"><path d="M6.300 1.500h3.400l4.500 11.300h1.300v1.700h-5v-1.700h1.500l-.9-2.400H4.900L4 12.800h1.500v1.700h-5v-1.700h1.300zM5.600 8.600h4.800L8 2.600z" fill="currentColor"/></svg>String</div><span class="cb"></span><span class="nl">Nullable</span><svg class="rm" width="13" height="13" viewBox="0 0 16 16"><circle cx="8" cy="8" r="8" fill="#e88b8b"/><rect x="3.600" y="6.800" width="8.800" height="2.400" rx="1" fill="#fff"/></svg></div>
    <div class="row" style="top:696.7px"><span class="radio" style="left:22.2px"></span><div class="inp dis" style="left:38.1px;width:291.5px">GroupID</div><div class="inp dis" style="left:338.3px;width:309.600px;padding-left:26.5px"><svg class="ti" width="10.500" height="11" style="left:9px;color:#6b717c" viewBox="0 0 16 16"><path d="M6.300 1.500h3.400l4.500 11.300h1.300v1.700h-5v-1.700h1.500l-.9-2.400H4.900L4 12.800h1.500v1.700h-5v-1.700h1.300zM5.600 8.600h4.800L8 2.600z" fill="currentColor"/></svg>String</div><span class="cb on"><svg width="11" height="9" viewBox="0 0 11 9" style="position:absolute;left:.7px;top:1.800px"><path d="M2 4.700l2.400 2.400L9 2.200" fill="none" stroke="#fff" stroke-width="1.700" stroke-linecap="round" stroke-linejoin="round"/></svg></span><span class="nl">Nullable</span><svg class="rm" width="13" height="13" viewBox="0 0 16 16"><circle cx="8" cy="8" r="8" fill="#e88b8b"/><rect x="3.600" y="6.800" width="8.800" height="2.400" rx="1" fill="#fff"/></svg></div>
    <div class="row" style="top:725.6px"><span class="radio" style="left:22.2px"></span><div class="inp dis" style="left:38.1px;width:291.5px">ItemName</div><div class="inp dis" style="left:338.3px;width:309.600px;padding-left:26.5px"><svg class="ti" width="10.500" height="11" style="left:9px;color:#6b717c" viewBox="0 0 16 16"><path d="M6.300 1.500h3.400l4.500 11.300h1.300v1.700h-5v-1.700h1.500l-.9-2.400H4.900L4 12.800h1.500v1.700h-5v-1.700h1.300zM5.600 8.600h4.800L8 2.600z" fill="currentColor"/></svg>String</div><span class="cb on"><svg width="11" height="9" viewBox="0 0 11 9" style="position:absolute;left:.7px;top:1.800px"><path d="M2 4.700l2.400 2.400L9 2.200" fill="none" stroke="#fff" stroke-width="1.700" stroke-linecap="round" stroke-linejoin="round"/></svg></span><span class="nl">Nullable</span><svg class="rm" width="13" height="13" viewBox="0 0 16 16"><circle cx="8" cy="8" r="8" fill="#e88b8b"/><rect x="3.600" y="6.800" width="8.800" height="2.400" rx="1" fill="#fff"/></svg></div>
    <div class="row" style="top:754.5px"><svg width="13.600" height="13.600" style="position:absolute;left:20.200px;top:3px;color:#1f2329" viewBox="0 0 16 16"><path d="M2.2 5.2 8 11l5.8-5.8" fill="none" stroke="currentColor" stroke-width="2" stroke-linecap="round" stroke-linejoin="round"/></svg><div class="inp dis" style="left:38.1px;width:291.5px">ColumnValues</div><div class="inp dis" style="left:338.3px;width:309.600px;padding-left:26.5px"><svg class="ti" width="9.500" height="11.500" viewBox="0 0 12 14" style="left:9.500px;top:3.200px"><circle cx="2.200" cy="2.200" r="1.600" fill="none" stroke="#6b717c" stroke-width="1.600"/><circle cx="9.800" cy="2.200" r="1.600" fill="none" stroke="#6b717c" stroke-width="1.600"/><circle cx="6" cy="11.800" r="1.600" fill="none" stroke="#6b717c" stroke-width="1.600"/><path d="M2.200 3.800c0 3.500 3.800 2.500 3.800 6.400M9.800 3.800c0 3.500-3.800 2.500-3.800 6.400" fill="none" stroke="#6b717c" stroke-width="1.700"/></svg>Monday Item Create Column Value v1.0.0</div><span class="cb on"><svg width="11" height="9" viewBox="0 0 11 9" style="position:absolute;left:.7px;top:1.800px"><path d="M2 4.700l2.400 2.400L9 2.200" fill="none" stroke="#fff" stroke-width="1.700" stroke-linecap="round" stroke-linejoin="round"/></svg></span><span class="nl">Nullable</span><svg class="rm" width="13" height="13" viewBox="0 0 16 16"><circle cx="8" cy="8" r="8" fill="#e88b8b"/><rect x="3.600" y="6.800" width="8.800" height="2.400" rx="1" fill="#fff"/></svg></div>
    <div class="row" style="top:783.4px"><span class="radio" style="left:43.7px"></span><div class="inp dis" style="left:59.3px;width:282.5px">ColumnID</div><div class="inp dis" style="left:349.9px;width:298px;padding-left:26.5px"><svg class="ti" width="10.500" height="11" style="left:9px;color:#6b717c" viewBox="0 0 16 16"><path d="M6.300 1.500h3.400l4.500 11.300h1.300v1.700h-5v-1.700h1.500l-.9-2.400H4.900L4 12.800h1.500v1.700h-5v-1.700h1.300zM5.600 8.600h4.800L8 2.600z" fill="currentColor"/></svg>String</div><span class="cb"></span><span class="nl">Nullable</span><svg class="rm" width="13" height="13" viewBox="0 0 16 16"><circle cx="8" cy="8" r="8" fill="#e88b8b"/><rect x="3.600" y="6.800" width="8.800" height="2.400" rx="1" fill="#fff"/></svg></div>
    <div class="row" style="top:811.9px"><span class="radio" style="left:43.7px"></span><div class="inp dis" style="left:59.3px;width:282.5px">Value</div><div class="inp dis" style="left:349.9px;width:298px;padding-left:26.5px"><svg class="ti" width="16" height="11.500" viewBox="0 0 20 14" style="left:7px;top:3.700px"><path d="M5.500 3 1.500 7l4 4M14.500 3l4 4-4 4M11.800 1 8.200 13" fill="none" stroke="#6b717c" stroke-width="2" stroke-linecap="round" stroke-linejoin="round"/></svg><span style="font-size:11.800px;letter-spacing:-.5px">JSON</span></div><span class="cb"></span><span class="nl">Nullable</span><svg class="rm" width="13" height="13" viewBox="0 0 16 16"><circle cx="8" cy="8" r="8" fill="#e88b8b"/><rect x="3.600" y="6.800" width="8.800" height="2.400" rx="1" fill="#fff"/></svg></div>
  </div>
</section>

<!-- ================= RIGHT PANEL ================= -->
<section class="panel" style="left:1060px;width:772px">
  <div class="ph" style="padding-left:7.500px">Configuration
    <svg width="11.500" height="11.500" style="position:absolute;left:749.300px;top:11.400px;color:#23272e" viewBox="0 0 16 16"><path d="M2.800 2.800 13.200 13.200M13.200 2.800 2.800 13.200" stroke="currentColor" stroke-width="1.500" fill="none"/><path d="M.8 5.600V.8h4.800zM10.400.8h4.800v4.800zM15.200 10.400v4.800h-4.800zM5.600 15.200H.8v-4.800z" fill="currentColor"/></svg>
  </div>
  <div class="card" style="left:7px;top:44.700px;width:758.500px;height:502.300px;border:2px solid #e0832f;border-radius:7px">
    <div class="ch" style="height:42.500px;border-bottom:1px solid #dcdfe3">
      <span class="ct" style="left:7.200px;top:3.300px;letter-spacing:-.23px">JS MAPPING STATEMENT</span>
      <svg width="12.500" height="12.500" style="position:absolute;left:170px;top:3.800px;color:#111" viewBox="0 0 16 16"><circle cx="8" cy="8" r="8" fill="currentColor"/><circle cx="8" cy="4.3" r="1.25" fill="#fff"/><path d="M6.3 7h2.6v4.3h1v1.3H6.2v-1.3h1V8.3h-.9z" fill="#fff"/></svg>
      <span class="ct" style="left:7.200px;top:23.600px;color:#1f2329;font-size:13.100px;letter-spacing:.15px">Monday Item create (with column values)</span>
      <svg width="11" height="12" viewBox="0 0 12 13" style="position:absolute;left:274.800px;top:25.200px"><rect x=".9" y="5.600" width="10.200" height="6.700" rx="1.300" fill="none" stroke="#2a2e36" stroke-width="1.200"/><path d="M3.200 5.600V3.600a2.800 2.800 0 0 1 5.600 0v2" fill="none" stroke="#2a2e36" stroke-width="1.200"/></svg>
      <svg width="16" height="12.800" style="position:absolute;left:633.300px;top:12.700px;color:#23272e" viewBox="0 0 20 16"><path d="M7 0.500c3.700 0 6.700 2.400 6.700 5.400S10.700 11.300 7 11.300c-.9 0-1.800-.1-2.600-.4C3.400 11.700 2 12.300.500 12.300c.8-.8 1.400-1.800 1.600-2.800C.9 8.500.300 7.300.300 5.900.300 2.900 3.300.500 7 .500z" fill="currentColor"/><path d="M15 6.200c2.600.6 4.700 2.500 4.700 4.800 0 1.200-.6 2.300-1.500 3.200.2.900.7 1.700 1.400 2.300-1.400 0-2.600-.5-3.500-1.200-.7.200-1.500.3-2.300.3-2.600 0-4.800-1.200-5.800-3 4-.2 7-2.900 7-6.400z" fill="currentColor"/></svg>
      <span class="abs" style="left:656.600px;top:12.500px;font-size:13px;line-height:17px">0</span>
      <svg width="12" height="12" viewBox="0 0 16 16" style="position:absolute;left:679.600px;top:13.300px"><path d="M2 1.200v4.800h4.800" fill="none" stroke="#23272e" stroke-width="2.100" stroke-linecap="round" stroke-linejoin="round"/><path d="M2.600 5.600A6.200 6.200 0 1 1 3.400 12.200" fill="none" stroke="#23272e" stroke-width="2.100" stroke-linecap="round"/></svg>
      <svg width="12" height="11" viewBox="0 0 12 11" style="position:absolute;left:706px;top:13.700px"><path d="M2.500 2.600 5 5.200 8.900.6M.7 5.300 5 9.900 10.900 3.900" fill="none" stroke="#3a8a2a" stroke-width="1.500" stroke-linecap="round" stroke-linejoin="round"/></svg>
      <svg width="12" height="11" style="position:absolute;left:730.900px;top:14.300px;color:#3357bd" viewBox="0 0 12 11"><path d="M3.800 1.500H12M3.800 5.500H12M3.800 9.500H12" stroke="currentColor" stroke-width="1.400" fill="none"/><rect x="0" y=".4" width="2.100" height="2.200" rx=".5" fill="currentColor"/><rect x="0" y="4.400" width="2.100" height="2.200" rx=".5" fill="currentColor"/><rect x="0" y="8.400" width="2.100" height="2.200" rx=".5" fill="currentColor"/></svg>
    </div>
    <span class="abs" style="left:7.200px;top:51px;font-size:12.500px;line-height:17px">JS Mapping:</span>
    <div id="editor" style="left:8px;top:70px;width:739px;height:358.300px">
      <div class="abs" style="left:42.500px;top:265.400px;width:680px;height:16.400px;border:1px solid #eeeeee"></div>
      <div class="abs" style="left:722.500px;top:7px;width:1px;height:340px;background:#d9d9d9"></div>
      <div class="abs" style="left:722.500px;top:7px;width:6px;height:1px;background:#d9d9d9"></div>
      <div class="abs" style="left:723.500px;top:153.500px;width:5.500px;height:1px;background:#555"></div>
      <div id="code">
<div><i>1</i><span class="k">return</span> <span class="b1">[</span></div>
<div><i>2</i><b class="g" style="left:43.0px"></b>  <span class="b2">{</span></div>
<div><i>3</i><b class="g" style="left:43.0px"></b><b class="g" style="left:56.0px"></b>    <span class="s">"BoardID"</span>: <span class="s">"1111111111"</span>,</div>
<div><i>4</i><b class="g" style="left:43.0px"></b><b class="g" style="left:56.0px"></b>    <span class="s">"ItemName"</span>: <span class="s">"This text will be displayed as Item name"</span>,</div>
<div><i>5</i><b class="g" style="left:43.0px"></b><b class="g" style="left:56.0px"></b>    <span class="s">"ColumnValues"</span>: <span class="b3">[</span></div>
<div><i>6</i><b class="g" style="left:43.0px"></b><b class="g" style="left:56.0px"></b><b class="g" style="left:69.0px"></b>      <span class="b1">{</span></div>
<div><i>7</i><b class="g" style="left:43.0px"></b><b class="g" style="left:56.0px"></b><b class="g" style="left:69.0px"></b><b class="g" style="left:82.0px"></b>        <span class="s">"ColumnID"</span>: <span class="s">"project_status"</span>,</div>
<div><i>8</i><b class="g" style="left:43.0px"></b><b class="g" style="left:56.0px"></b><b class="g" style="left:69.0px"></b><b class="g" style="left:82.0px"></b>        <span class="s">"Value"</span>: <span class="s">"Working on it"</span></div>
<div><i>9</i><b class="g" style="left:43.0px"></b><b class="g" style="left:56.0px"></b><b class="g" style="left:69.0px"></b>      <span class="b1">}</span>,</div>
<div><i>10</i><b class="g" style="left:43.0px"></b><b class="g" style="left:56.0px"></b><b class="g" style="left:69.0px"></b>      <span class="b1">{</span></div>
<div><i>11</i><b class="g" style="left:43.0px"></b><b class="g" style="left:56.0px"></b><b class="g" style="left:69.0px"></b><b class="g" style="left:82.0px"></b>        <span class="s">"ColumnID"</span>: <span class="s">"priority"</span>,</div>
<div><i>12</i><b class="g" style="left:43.0px"></b><b class="g" style="left:56.0px"></b><b class="g" style="left:69.0px"></b><b class="g" style="left:82.0px"></b>        <span class="s">"Value"</span>: <span class="s">"Medium"</span></div>
<div><i>13</i><b class="g" style="left:43.0px"></b><b class="g" style="left:56.0px"></b><b class="g" style="left:69.0px"></b>      <span class="b1">}</span></div>
<div><i>14</i><b class="g" style="left:43.0px"></b><b class="g" style="left:56.0px"></b>    <span class="b3">]</span></div>
<div><i>15</i><b class="g" style="left:43.0px"></b>  <span class="b2">}</span></div>
<div><i>16</i><span class="b1">]</span></div>
<div><i style="color:#0b216f">17</i></div>
</div>
      <svg width="8" height="8" viewBox="0 0 8 8" style="position:absolute;right:0;bottom:0"><path d="M7.500 1 1 7.500M7.500 4.500l-3 3" stroke="#555" stroke-width=".9"/></svg>
    </div>
    <span class="abs" style="left:7.200px;top:436px;font-size:13.300px;line-height:17px">Data checkpoint column:</span>
    <div class="inp" style="left:7.200px;top:455.300px;width:741px;height:28.600px;border-color:#5d646f"></div>
  </div>
</section>
</div>
</body>
</html>
